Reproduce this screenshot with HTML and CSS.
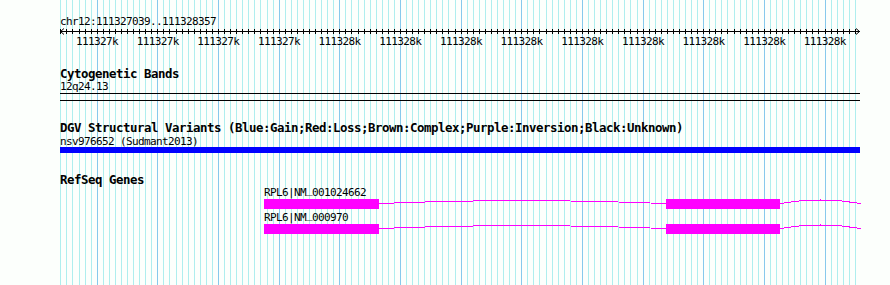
FILE: index.html
```html
<!DOCTYPE html>
<html lang="en">
<head>
<meta charset="utf-8">
<title>Genome browser</title>
<link rel="stylesheet" href="styles.css">
</head>
<body>
<div class="page">
  <svg class="grid" id="grid" width="890" height="285" aria-hidden="true"></svg>
  <div class="tracks">
    <div class="ruler">
      <div class="loc">chr12:111327039..111328357</div>
      <svg class="scale" width="806" height="20" viewBox="0 0 806 20">
        <g class="axis">
          <line x1="0" y1="4.5" x2="800" y2="4.5"/>
          <g id="ticks"></g>
        </g>
        <path class="arrow" d="M4 1.5 L0.5 4.5 L4 7.5 M796 1.5 L799.5 4.5 L796 7.5"/>
        <g class="scale-labels">
          <text x="37">111327k</text>
          <text x="97.7">111327k</text>
          <text x="158.3">111327k</text>
          <text x="219">111327k</text>
          <text x="279.6">111328k</text>
          <text x="340.3">111328k</text>
          <text x="400.9">111328k</text>
          <text x="461.6">111328k</text>
          <text x="522.2">111328k</text>
          <text x="582.9">111328k</text>
          <text x="643.5">111328k</text>
          <text x="704.2">111328k</text>
          <text x="764.8">111328k</text>
        </g>
      </svg>
    </div>

    <section class="track track-cyto">
      <h2 class="track-title">Cytogenetic Bands</h2>
      <div class="feature-label">12q24.13</div>
      <div class="band"></div>
    </section>

    <section class="track track-dgv">
      <h2 class="track-title">DGV Structural Variants (Blue:Gain;Red:Loss;Brown:Complex;Purple:Inversion;Black:Unknown)</h2>
      <div class="feature-label feature-label-gap">nsv976652 (Sudmant2013)</div>
      <div class="dgv-bar"></div>
    </section>

    <section class="track track-genes">
      <h2 class="track-title">RefSeq Genes</h2>
      <div class="transcript">
        <div class="gene-label" style="margin-left:204px">RPL6|NM<span class="us">_</span>001024662</div>
        <svg class="gene-model" width="806" height="10" viewBox="0 0 806 10">
          <rect x="204" y="0" width="115" height="10"/>
          <path d="M319 4.5 Q462.5 -1.5 606 4.5"/>
          <rect x="606" y="0" width="114" height="10"/>
          <path d="M720 4.5 Q760.5 -2.5 801 4.5"/>
        </svg>
      </div>
      <div class="transcript transcript-next">
        <div class="gene-label" style="margin-left:204px">RPL6|NM<span class="us">_</span>000970</div>
        <svg class="gene-model" width="806" height="10" viewBox="0 0 806 10">
          <rect x="204" y="0" width="115" height="10"/>
          <path d="M319 4.5 Q462.5 -1.5 606 4.5"/>
          <rect x="606" y="0" width="114" height="10"/>
          <path d="M720 4.5 Q760.5 -2.5 801 4.5"/>
        </svg>
      </div>
    </section>
  </div>
</div>
<script src="script.js"></script>
</body>
</html>
```

FILE: styles.css
```css
html, body {
  margin: 0;
  padding: 0;
  background: #fcfffc;
}

body {
  font-family: "DejaVu Sans Mono", "Liberation Mono", monospace;
  color: #000;
}

.page {
  position: relative;
  width: 890px;
  height: 285px;
  overflow: hidden;
}

.grid {
  position: absolute;
  left: 0;
  top: 0;
  shape-rendering: crispEdges;
}

.grid .minor {
  stroke: #aeeeee;
  stroke-width: 1;
}

.grid .major {
  stroke: #87c9ec;
  stroke-width: 1;
}

.tracks {
  position: relative;
  padding: 16px 0 0 60px;
  width: 800px;
}

.loc {
  font-size: 11px;
  letter-spacing: -0.62px;
  line-height: 11px;
  height: 11px;
  white-space: pre;
}

.scale {
  display: block;
  overflow: visible;
}

.axis line {
  stroke: #000;
  stroke-width: 1;
  shape-rendering: crispEdges;
}

.arrow {
  fill: none;
  stroke: #000;
  stroke-width: 1;
}

.scale-labels text {
  font-family: "DejaVu Sans Mono", "Liberation Mono", monospace;
  font-size: 11px;
  letter-spacing: -0.62px;
  text-anchor: middle;
  fill: #000;
}

.scale-labels {
  transform: translateY(18px);
}

.track-title {
  margin: 0;
  font-size: 12.4px;
  letter-spacing: -0.46px;
  font-weight: bold;
  line-height: 12px;
  height: 13px;
  white-space: nowrap;
}

.feature-label {
  font-size: 11px;
  letter-spacing: -0.62px;
  line-height: 11px;
  height: 11px;
  white-space: nowrap;
}

.feature-label-gap {
  margin-top: 1px;
}

.track-cyto {
  margin-top: 21px;
}

.band {
  margin-top: 1px;
  height: 6px;
  border-top: 1px solid #000;
  border-bottom: 1px solid #000;
}

.track-dgv {
  margin-top: 21px;
}

.dgv-bar {
  height: 6px;
  background: #0000ff;
}

.track-genes {
  margin-top: 21px;
}

.transcript-next {
  margin-top: 3px;
}

.gene-label {
  font-size: 11px;
  letter-spacing: -0.62px;
  line-height: 11px;
  height: 11px;
  white-space: nowrap;
}

.gene-label .us {
  line-height: 0;
  vertical-align: 3px;
}

.gene-model {
  display: block;
  margin-top: 1px;
  overflow: visible;
}

.gene-model rect {
  fill: #ff00ff;
  shape-rendering: crispEdges;
}

.gene-model path {
  fill: none;
  stroke: #ff00ff;
  stroke-width: 1;
  shape-rendering: crispEdges;
}
```

FILE: script.js
```js
(function () {
  var NS = "http://www.w3.org/2000/svg";
  var scale = 800 / 1319;
  var grid = document.getElementById("grid");
  var ticks = document.getElementById("ticks");
  for (var b = 1; b <= 1319; b += 10) {
    var rel = Math.floor(b * scale + 0.2);
    var major = (b + 39) % 100 === 0;
    var line = document.createElementNS(NS, "line");
    line.setAttribute("x1", 60 + rel + 0.5);
    line.setAttribute("x2", 60 + rel + 0.5);
    line.setAttribute("y1", 0);
    line.setAttribute("y2", 285);
    line.setAttribute("class", major ? "major" : "minor");
    grid.appendChild(line);

    var tick = document.createElementNS(NS, "line");
    tick.setAttribute("x1", rel + 0.5);
    tick.setAttribute("x2", rel + 0.5);
    tick.setAttribute("y1", 2);
    tick.setAttribute("y2", 7);
    ticks.appendChild(tick);
  }
})();
```
